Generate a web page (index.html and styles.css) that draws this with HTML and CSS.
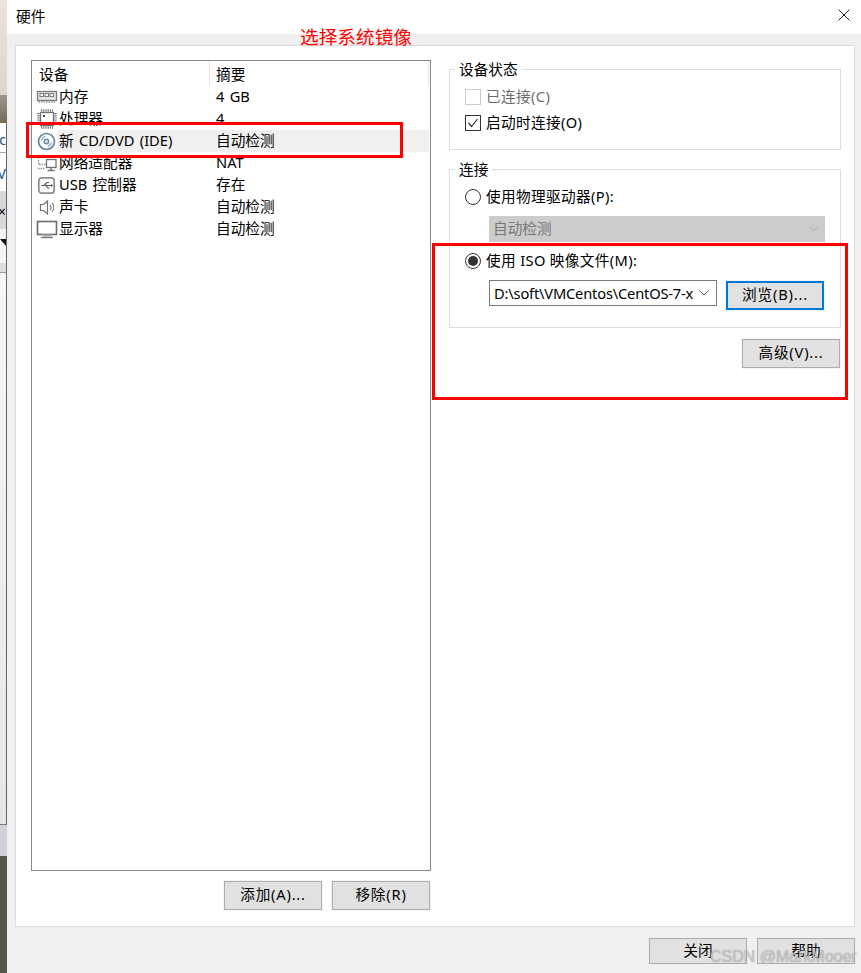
FILE: index.html
```html
<!DOCTYPE html>
<html lang="zh">
<head>
<meta charset="utf-8">
<title>硬件</title>
<link rel="stylesheet" href="styles.css">
</head>
<body>
<div class="desk">
  <div class="strip">
    <div class="s s-tan"></div>
    <div class="s s-brown"></div>
    <div class="s s-c"><span>c</span></div>
    <div class="s s-v"><span>V</span></div>
    <div class="s s-x"><span>×</span></div>
    <div class="s s-tri"><i></i></div>
    <div class="s s-band"></div>
    <div class="s s-long"></div>
    <div class="s s-grey"></div>
    <div class="s s-dark"></div>
  </div>
  <div class="dialog">
    <header class="titlebar">
      <span class="title">硬件</span>
      <svg class="close" viewBox="0 0 12 12" width="12" height="12"><path d="M.5.5l11 11M11.5.5l-11 11" fill="none" stroke="#222" stroke-width="1"/></svg>
    </header>
    <div class="body">
      <div class="panel">
        <section class="left">
          <div class="list">
            <div class="head">
              <div class="hcell first">设备</div>
              <div class="hcell second">摘要</div>
            </div>
            <div class="row">
              <svg class="ico" viewBox="0 0 22 22"><rect x="1.500" y="5.500" width="19" height="9" fill="#e4e4e4" stroke="#777b7e" stroke-width="1.300"/><rect x="4" y="7.500" width="3.500" height="3" fill="#fff" stroke="#777b7e"/><rect x="9" y="7.500" width="3.500" height="3" fill="#fff" stroke="#777b7e"/><rect x="14" y="7.500" width="3.500" height="3" fill="#fff" stroke="#777b7e"/><path d="M2.500 16h17" stroke="#8e9194" stroke-width="1.500" stroke-dasharray="1.500 1"/></svg>
              <div class="name">内存</div><div class="sum">4 GB</div>
            </div>
            <div class="row">
              <svg class="ico" viewBox="0 0 22 22"><rect x="4.500" y="4.500" width="13" height="13" fill="#fff" stroke="#6f7376" stroke-width="1.300"/><rect x="7" y="7" width="2" height="2" fill="#444"/><path d="M5 2.500h12M5 19.500h12M2.500 5v12M19.500 5v12" stroke="#777b7e" stroke-width="2.400" stroke-dasharray="1.200 1"/></svg>
              <div class="name">处理器</div><div class="sum">4</div>
            </div>
            <div class="row selected">
              <svg class="ico" viewBox="0 0 22 22"><circle cx="10.500" cy="11.500" r="8" fill="#fff" stroke="#5f85a3" stroke-width="1.700"/><circle cx="10.500" cy="11.500" r="2.300" fill="#cfdbe4" stroke="#5f85a3" stroke-width="1.200"/><path d="M5.500 10.500a5.500 5.500 0 0 1 4-4M15.500 12.500a5.500 5.500 0 0 1-4 4" fill="none" stroke="#8eaabf" stroke-width="1.200"/></svg>
              <div class="name">新 CD/DVD (IDE)</div><div class="sum">自动检测</div>
            </div>
            <div class="row">
              <svg class="ico" viewBox="0 0 22 22"><rect x="2.500" y="3.500" width="9" height="9" fill="none" stroke="#8e9194" stroke-width="1.300" stroke-dasharray="1.500 1"/><rect x="10.500" y="7.500" width="9.500" height="8" fill="#fff" stroke="#6f7376" stroke-width="1.300"/><path d="M15 16v2M11.500 18.500h7" stroke="#6f7376" stroke-width="1.300"/><path d="M2 16.500h7" stroke="#8e9194" stroke-width="1.300" stroke-dasharray="1.500 1"/></svg>
              <div class="name">网络适配器</div><div class="sum">NAT</div>
            </div>
            <div class="row">
              <svg class="ico" viewBox="0 0 22 22"><rect x="2.800" y="3.800" width="15.400" height="15.400" rx="3" fill="#fff" stroke="#8b8e90" stroke-width="1.700"/><path d="M5.500 11.500h10M8 11.500l3-3h2M10 11.500l2 2.500h1.500" fill="none" stroke="#55595c" stroke-width="1.100"/><path d="M15 10l2.200 1.500L15 13z" fill="#55595c"/></svg>
              <div class="name">USB 控制器</div><div class="sum">存在</div>
            </div>
            <div class="row">
              <svg class="ico" viewBox="0 0 22 22"><path d="M4.500 8.500h3l4-3.500v13l-4-3.500h-3z" fill="#fff" stroke="#6f7376" stroke-width="1.200"/><path d="M14 9a4 4 0 0 1 0 5M16 7a7 7 0 0 1 0 9" fill="none" stroke="#777b7e" stroke-width="1.200"/></svg>
              <div class="name">声卡</div><div class="sum">自动检测</div>
            </div>
            <div class="row">
              <svg class="ico" viewBox="0 0 22 22"><rect x="1.500" y="3.500" width="19" height="13" fill="#fff" stroke="#6f7376" stroke-width="1.700"/><path d="M7 17.500h8" stroke="#a8abad" stroke-width="2"/><path d="M5 19.500h12" stroke="#6f7376" stroke-width="1.300"/></svg>
              <div class="name">显示器</div><div class="sum">自动检测</div>
            </div>
          </div>
          <div class="list-actions">
            <button class="btn">添加(A)...</button>
            <button class="btn">移除(R)</button>
          </div>
        </section>
        <section class="right">
          <div class="group status">
            <span class="legend">设备状态</span>
            <div class="opt disabled"><span class="check off"></span><span class="lbl">已连接(C)</span></div>
            <div class="opt"><span class="check"><svg viewBox="0 0 14 14" width="14" height="14"><path d="M2.500 7l3 3.500 6-7.500" fill="none" stroke="#333" stroke-width="1.200"/></svg></span><span class="lbl">启动时连接(O)</span></div>
          </div>
          <div class="group conn">
            <span class="legend">连接</span>
            <div class="opt"><span class="radio"></span><span class="lbl">使用物理驱动器(P):</span></div>
            <div class="select off-select"><span class="lbl">自动检测</span><svg viewBox="0 0 10 6" width="10" height="6"><path d="M.5.500l4.500 4.500 4.500-4.500" fill="none" stroke="#b0b0b0"/></svg></div>
            <div class="opt iso"><span class="radio on"></span><span class="lbl">使用 ISO 映像文件(M):</span></div>
            <div class="iso-row">
              <div class="select combo"><span class="path">D:\soft\VMCentos\CentOS-7-x</span><svg viewBox="0 0 10 6" width="10" height="6"><path d="M.5.500l4.500 4.500 4.500-4.500" fill="none" stroke="#555"/></svg></div>
              <button class="btn focus">浏览(B)...</button>
            </div>
          </div>
          <div class="adv"><button class="btn">高级(V)...</button></div>
        </section>
      </div>
      <footer class="foot">
        <button class="btn">关闭</button>
        <button class="btn">帮助</button>
      </footer>
    </div>
  </div>
</div>
<div class="mark box-a"></div>
<div class="mark box-b"></div>
<div class="note">选择系统镜像</div>
<div class="water">CSDN @MarkMooer</div>
</body>
</html>
```
FILE: styles.css
```css
* { box-sizing: border-box; }
html, body { margin: 0; padding: 0; }
body {
  width: 861px; height: 973px; overflow: hidden; position: relative;
  background: #f0f0f0; color: #000;
  font-family: "Noto Sans", "Noto Sans CJK SC", sans-serif;
  font-size: 14.67px;
}
.desk { display: flex; height: 973px; }

.strip { width: 7px; flex: none; display: flex; flex-direction: column; overflow: hidden; }
.s { flex: none; width: 100%; position: relative; font-size: 14px; line-height: 1; overflow: hidden; }
.s span { position: absolute; right: 0; }
.s-tan { height: 95px; background: linear-gradient(#e9e4dd, #ddd5ca); }
.s-brown { height: 28px; background: linear-gradient(#a0958a, #75695e); }
.s-c { height: 30px; background: #fff; border-right: 1px solid #666; border-bottom: 1px solid #aaa; color: #1a4f80; }
.s-c span { top: 10px; }
.s-v { height: 38px; background: #fff; border-right: 1px solid #666; color: #1a4f80; }
.s-v span { top: 14px; }
.s-x { height: 38px; background: #d9d9d9; border-right: 1px solid #666; }
.s-x span { top: 14px; }
.s-tri { height: 34px; background: #f4f4f4; border-right: 1px solid #666; }
.s-tri i { position: absolute; left: 0; top: 10px; border-top: 7px solid #111; border-left: 6px solid transparent; }
.s-band { height: 10px; background: #dcdcdc; border-right: 1px solid #666; border-bottom: 1px solid #999; }
.s-long { height: 552px; background: linear-gradient(#f6f6f6, #e6e6e6); border-right: 1px solid #666; border-bottom: 1px solid #777; }
.s-grey { height: 31px; background: #cfd2d6; }
.s-dark { height: 117px; background: #55564f; }

.dialog { flex: 1; min-width: 0; display: flex; flex-direction: column; }
.titlebar { height: 34px; background: #fff; display: flex; align-items: center; justify-content: space-between; padding: 0 11px 4px 9px; }
.body { flex: 1; background: #f0f0f0; padding: 11px 6px 0 8px; }

.panel { height: 882px; background: #fff; border: 1px solid #dcdcdc; padding: 14px 13px 0 15px; display: flex; gap: 18px; }
.left { width: 400px; flex: none; }
.right { flex: 1; padding-top: 9px; min-width: 0; }

.list { height: 811px; border: 1px solid #828790; }
.head { display: flex; height: 25px; line-height: 26px; }
.hcell.first { width: 178px; padding-left: 7px; border-right: 1px solid #e5e5e5; }
.hcell.second { flex: 1; padding-left: 6px; border-right: 1px solid #e5e5e5; margin-right: 1px; }
.row { display: flex; height: 22px; line-height: 21px; word-spacing: 1.5px; }
.ico { width: 22px; height: 22px; margin-left: 4px; margin-right: -1px; flex: none; overflow: visible; }
.name { width: 160px; flex: none; padding-left: 2px; white-space: nowrap; }
.sum { flex: 1; margin-right: 1px; margin-left: -1px; }
.selected .name, .selected .sum { background: #f0f0f0; }
.selected .sum { margin-left: 0; text-indent: -1px; }

.list-actions { display: flex; justify-content: flex-end; gap: 10px; margin-top: 10px; padding-right: 1px; }
.btn {
  width: 98px; height: 29px; padding: 0 0 2px; border: 1px solid #adadad; background: #e1e1e1; color: #000;
  font: inherit; line-height: 1; letter-spacing: .8px; box-shadow: 0 0 0 1px #f4f4f4;
}
.btn.focus { border: 2px solid #0078d7; margin-top: 1px; flex: none; }

.group { position: relative; border: 1px solid #dcdcdc; }
.legend { position: absolute; left: 5px; top: -10px; padding: 0 4px; background: #fff; line-height: 18px; }
.status { height: 81px; padding: 14px 15px 0; }
.conn { height: 159px; margin-top: 19px; padding: 14px 15px 0; }
.opt { display: flex; align-items: center; gap: 5px; height: 26px; white-space: nowrap; letter-spacing: .35px; }
.lbl { margin-bottom: 3px; }
.opt.disabled { color: #6d6d6d; }
.opt.iso { margin-top: 6px; }
.check { width: 16px; height: 16px; border: 1px solid #333; display: flex; align-items: center; justify-content: center; flex: none; }
.check.off { border-color: #ccc; }
.radio { width: 16px; height: 16px; border: 1px solid #333; border-radius: 50%; flex: none; position: relative; }
.radio.on::after { content: ""; position: absolute; left: 2px; top: 2px; width: 10px; height: 10px; border-radius: 50%; background: #333; }

.select { height: 26px; display: flex; align-items: center; justify-content: space-between; padding: 0 7px 0 4px; white-space: nowrap; }
.off-select { margin: 6px 0 0 24px; width: 336px; background: #ccc; color: #777; padding-right: 6px; }
.iso-row { display: flex; align-items: flex-start; gap: 9px; margin: 6px 0 0 24px; }
.combo { width: 228px; border: 1px solid #7a7a7a; background: #fff; overflow: hidden; }
.path { letter-spacing: -.18px; }
.adv { display: flex; justify-content: flex-end; margin-top: 11px; padding-right: 1px; }

.foot { display: flex; justify-content: flex-end; gap: 10px; margin-top: 11px; }
.foot .btn { height: 26px; box-shadow: none; letter-spacing: 0; padding: 0 0 1px; }

.mark { position: absolute; border: 3px solid #f00; }
.box-a { left: 26px; top: 122px; width: 377px; height: 36px; }
.box-b { left: 432px; top: 243px; width: 416px; height: 157px; }
.note { position: absolute; left: 300px; top: 23px; font-size: 18.67px; line-height: 28px; color: #f00; white-space: nowrap; }
.water { position: absolute; left: 710px; top: 947px; font-family: "Liberation Sans", sans-serif; font-size: 16px; line-height: 20px; color: rgba(255,255,255,.55); text-shadow: 0 0 1px rgba(100,100,100,.9); white-space: nowrap; }
```
